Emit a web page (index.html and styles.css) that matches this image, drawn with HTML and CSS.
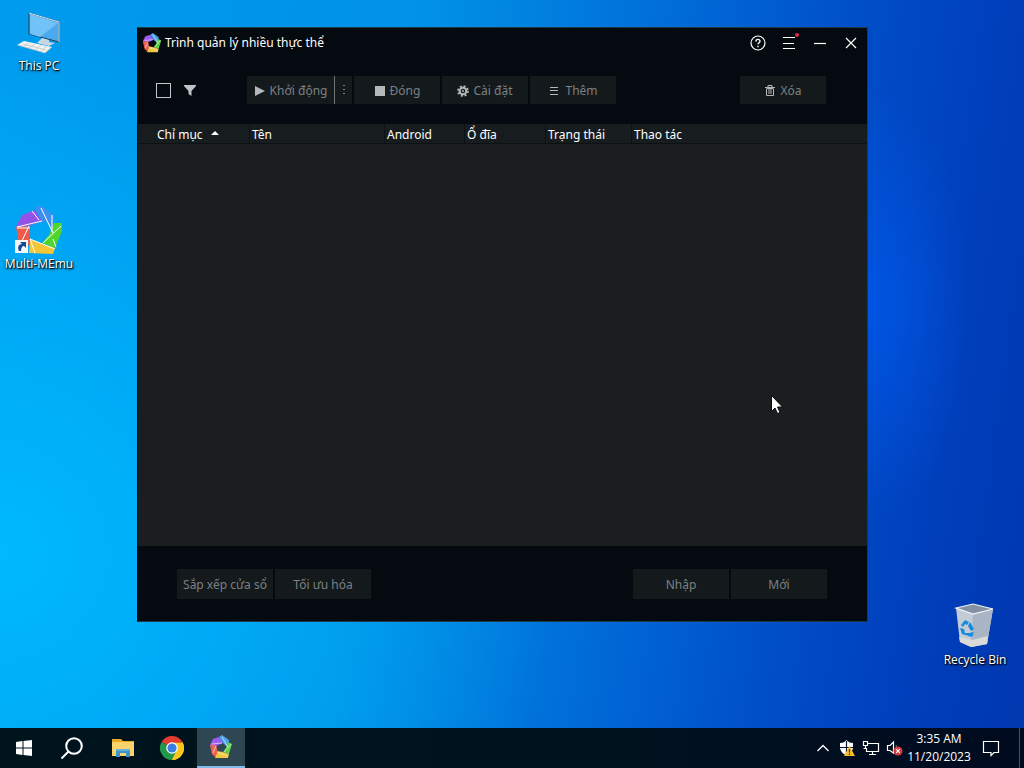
FILE: index.html
```html
<!DOCTYPE html>
<html lang="vi">
<head>
<meta charset="utf-8">
<title>Trình quản lý nhiều thực thể</title>
<link rel="stylesheet" href="styles.css">
</head>
<body>
<svg class="defs" aria-hidden="true">
  <symbol id="memu" viewBox="0 0 48 48">
    <path d="M1 21 7 9 20 4 27 15 14 20z" fill="#9254e8"/>
    <path d="M20 1 27 0 39 9 38 27 33 17 27 15z" fill="#3c91f0"/>
    <path d="M39 17 47 17 47 25 40 42 27 37 34 29z" fill="#50d52c"/>
    <path d="M15 33 28 38 40 42 38 48 14 47z" fill="#f4c534"/>
    <path d="M1 21 15 20 14 39 4 38z" fill="#ee5a48"/>
    <path d="M2 21 27 15M17 5 24 14M26 2 38 27M37 9V26M46 20 28 37M38 33 41 41M15 33 40 43M15 33 20 47M14 20 6 37M2 22H15" fill="none" stroke="#fff" stroke-width="1"/>
  </symbol>
  <symbol id="memu-small" viewBox="0 0 24 24">
    <path d="M1 10 4 4 10 2 14 8 7 11z" fill="#9b5df0"/>
    <path d="M10 2 13 0 20 5 19 13 14 8z" fill="#4ba3ee"/>
    <path d="M19 7 23 9 20 19 14 17 17 13z" fill="#5fd04a"/>
    <path d="M8 16 14 17 20 19 19 23 6 23z" fill="#f1c744"/>
    <path d="M1 10 7 10 9 17 6 22 3 19z" fill="#ec6152"/>
    <path d="M3 9 13 8M13 2 19 12M22 9 15 17M8 17 18 21M7 11 4 18" fill="none" stroke="#fff" stroke-width=".8" opacity=".75"/>
  </symbol>
</svg>

<main class="desktop">
  <a class="shortcut shortcut-pc" href="#pc">
    <svg width="48" height="48" viewBox="0 0 48 48" aria-hidden="true">
      <path d="M14 5 44 14V34L14 26z" fill="#4ba9ee" stroke="#263f58"/>
      <path d="M15 6 43 15 25 29 15 26z" fill="#71c2f7"/>
      <path d="M14 5 44 14V34" fill="none" stroke="#d6e4e9"/>
      <path d="M27 30 34 32V34L40 35 34 38 22 35z" fill="#c5d8e3"/>
      <path d="M9 33 37 39 30 45 2 37z" fill="#f2f2ef"/>
      <path d="M3 37 30 45 37 39M8 36 31 42M14 35 8 39M20 36 14 40M26 37 20 42M32 38 26 43" fill="none" stroke="#b4bfc6" stroke-width=".7"/>
    </svg>
    <span>This PC</span>
  </a>
  <a class="shortcut shortcut-memu" href="#memu-app">
    <svg width="48" height="48" viewBox="0 0 48 48" aria-hidden="true">
      <use href="#memu"/>
      <path d="M0 34H13V47H0z" fill="#f5f5f5"/>
      <path d="M4 45C2 41 4 38 7 38L5 36H11V42L9 40C7 40 6 42 6 45z" fill="#174a91"/>
    </svg>
    <span>Multi-MEmu</span>
  </a>
  <a class="shortcut shortcut-bin" href="#bin">
    <svg width="48" height="48" viewBox="0 0 48 48" aria-hidden="true">
      <path d="M5 6 22 11 42 7 36 42 20 45 9 40z" fill="#c3cbd6"/>
      <path d="M22 11 42 7 36 42 20 45z" fill="#a9b4c4"/>
      <path d="M8 35 21 38 37 34 36 42 20 45 9 40z" fill="#dadbd8"/>
      <path d="M5 6 22 2 42 7 22 12z" fill="#8491a5" stroke="#eef2f5" stroke-width="1.200"/>
      <path d="M10 23 14 18 18 20 16 23 14 22 12 25zM19 20 23 27 20 29 17 24zM9 26 13 27 14 31H18V34L11 32zM18 31 23 30 21 35 17 34z" fill="#168bdc"/>
    </svg>
    <span>Recycle Bin</span>
  </a>

  <section class="window" aria-label="Trình quản lý nhiều thực thể">
    <header class="titlebar">
      <svg width="20" height="20" aria-hidden="true"><use href="#memu-small"/></svg>
      <h1 class="title">Trình quản lý nhiều thực thể</h1>
      <div class="controls">
        <button class="control" aria-label="Trợ giúp"><svg width="16" height="16" viewBox="0 0 16 16"><circle cx="8" cy="8" r="7"/><path d="M6 6.4C6 3.6 10 3.8 10 6.2 10 7.7 8 7.7 8 9.3M8 10.8V12.2" stroke-width="1.4"/></svg></button>
        <button class="control" aria-label="Menu"><svg width="16" height="16" viewBox="0 0 16 16"><path d="M2 2.5H14M2 8.5H13M2 13.5H14"/></svg><i class="dot"></i></button>
        <button class="control" aria-label="Thu nhỏ"><svg width="16" height="16" viewBox="0 0 16 16"><path d="M2 8.5H14"/></svg></button>
        <button class="control" aria-label="Đóng cửa sổ"><svg width="16" height="16" viewBox="0 0 16 16"><path d="M3 3 13 13M13 3 3 13"/></svg></button>
      </div>
    </header>

    <div class="toolbar">
      <div class="selection">
        <input class="check" type="checkbox" aria-label="Chọn tất cả">
        <button class="filter" aria-label="Lọc"><svg width="14" height="14" viewBox="0 0 14 14"><path d="M1 2H13V3L8.500 8V13L5.500 11V8L1 3z" fill="#bfc3c5"/></svg></button>
      </div>
      <div class="actions">
        <div class="split">
          <button class="btn start"><svg width="12" height="12" viewBox="0 0 12 12"><path d="M1 1 11 6 1 11z" fill="#b4b8ba"/></svg>Khởi động</button>
          <button class="more" aria-label="Thêm tùy chọn khởi động"><svg width="4" height="12" viewBox="0 0 4 12"><path d="M1 1H3V2H1zM1 5H3V6H1zM1 9H3V10H1z" fill="#777d80"/></svg></button>
        </div>
        <button class="btn"><svg width="12" height="12" viewBox="0 0 12 12"><path d="M1 1H11V11H1z" fill="#b4b8ba"/></svg>Đóng</button>
        <button class="btn"><svg width="12" height="12" viewBox="0 0 12 12"><circle cx="6" cy="6" r="3.300" fill="none" stroke="#b4b8ba" stroke-width="2"/><circle cx="6" cy="6" r="4.900" fill="none" stroke="#b4b8ba" stroke-width="1.800" stroke-dasharray="2 1.848"/><circle cx="6" cy="6" r="1" fill="#b4b8ba"/></svg>Cài đặt</button>
        <button class="btn btn-add"><svg width="12" height="12" viewBox="0 0 12 12"><path d="M2 2.500H10M2 5.500H10M2 9.500H10" stroke="#b4b8ba"/></svg>Thêm</button>
      </div>
      <button class="btn"><svg width="12" height="12" viewBox="0 0 12 12"><path d="M1 2.500H11M4 2V.5H8V2M2.500 4V10.500H9.500V4M5 4V9M7 4V9M2.500 3.500H9.500" fill="none" stroke="#b4b8ba"/></svg>Xóa</button>
    </div>

    <div class="list">
      <table class="table">
        <colgroup><col class="c-index"><col class="c-name"><col class="c-android"><col class="c-disk"><col class="c-state"><col></colgroup>
        <thead>
          <tr>
            <th class="first">Chỉ mục<svg class="sort" width="8" height="4" viewBox="0 0 8 4" aria-hidden="true"><path d="M0 4 4 0 8 4z" fill="#fff"/></svg></th>
            <th>Tên</th><th>Android</th><th>Ổ đĩa</th><th>Trạng thái</th><th>Thao tác</th>
          </tr>
        </thead>
      </table>
    </div>

    <footer class="footer">
      <button class="btn wide">Sắp xếp cửa sổ</button>
      <button class="btn wide">Tối ưu hóa</button>
      <span class="spacer"></span>
      <button class="btn wide">Nhập</button>
      <button class="btn wide">Mới</button>
    </footer>
  </section>

  <svg class="cursor" width="12" height="19" viewBox="0 0 12 19" aria-hidden="true"><path d="M.5.5V16.500L4 13 6.500 18.500 9 17.500 6.500 12H11.500z" fill="#fff" stroke="#0b0d0f"/></svg>
</main>

<nav class="taskbar" aria-label="Taskbar">
  <button class="task" aria-label="Start"><svg width="18" height="18" viewBox="0 0 18 18"><path d="M1 3 7.500 2V8.500H1zM8.500 2 17 1V8.500H8.500zM1 9.500H7.500V16L1 15zM8.500 9.500H17V17L8.500 16z" fill="#fff"/></svg></button>
  <button class="task" aria-label="Search"><svg width="24" height="24" viewBox="0 0 24 24"><circle cx="14" cy="10" r="7.800" fill="none" stroke="#fff" stroke-width="2"/><path d="M8.500 15.500 1.500 22.500" stroke="#fff" stroke-width="2"/></svg></button>
  <button class="task explorer" aria-label="File Explorer"><svg width="22" height="20" viewBox="0 0 22 20"><path d="M0 1H9L11 3H22V18H0z" fill="#e7a927"/><path d="M0 4H22V18H0z" fill="#fbd36b"/><path d="M4 11H18V19H14V15H8V19H4z" fill="#3f91c9"/><path d="M4 11H18V13H4z" fill="#63b1de"/></svg></button>
  <button class="task" aria-label="Chrome"><svg width="24" height="24" viewBox="0 0 24 24"><path d="M12 12 1.600 6A12 12 0 0 1 22.400 6z" fill="#e33b2e"/><path d="M12 12 22.400 6A12 12 0 0 1 12 24z" fill="#fbc71b"/><path d="M12 12V24A12 12 0 0 1 1.600 6z" fill="#24984a"/><path d="M12 6.500H22.600L16.800 14.700z" fill="#fbc71b"/><path d="M12 6.500H22.600L22.400 6 20.800 4.500 12 5z" fill="#e33b2e"/><path d="M7.200 14.700 12 12 16.800 14.700 12 24z" fill="#24984a"/><path d="M16.800 14.700 12 24A12 12 0 0 0 22.600 6.500z" fill="#fbc71b"/><circle cx="12" cy="12" r="5.800" fill="#fff"/><circle cx="12" cy="12" r="4.600" fill="#3a7de5"/></svg></button>
  <button class="task active" aria-label="Multi-MEmu"><svg width="24" height="24"><use href="#memu-small"/></svg></button>
  <div class="tray">
    <button class="tray-btn" aria-label="Show hidden icons"><svg width="14" height="14" viewBox="0 0 14 14"><path d="M1.500 10 7 4.500 12.500 10" fill="none" stroke="#fff" stroke-width="1.300"/></svg></button>
    <button class="tray-btn" aria-label="Windows Security"><svg width="16" height="16" viewBox="0 0 16 16"><path d="M1 3C4 3 6 2 7.500 0 9 2 11 3 14 3V7C14 11 11 14 7.500 15.500 4 14 1 11 1 7z" fill="#fff"/><path d="M7.500 1V15M1 7.500H14" stroke="#07162a" stroke-width="1.200"/><path d="M10.500 6 16 16H5z" fill="#f6bd2d"/><path d="M10.500 9V12.500M10.500 13.500V15" stroke="#44371a" stroke-width="1.200"/></svg></button>
    <button class="tray-btn" aria-label="Network"><svg width="18" height="16" viewBox="0 0 18 16"><path d="M6 3.500H16.500V11.500H4.500V8M10.500 11.500V14.500M7 14.500H14M1.500 1.500H5.500V5.500H1.500zM3.500 5.500V8.500H1.500" fill="none" stroke="#fff" stroke-width="1.200"/></svg></button>
    <button class="tray-btn" aria-label="Volume muted"><svg width="18" height="16" viewBox="0 0 18 16"><path d="M1.500 5.500H4L7.500 2V13L4 10.500H1.500z" fill="none" stroke="#fff" stroke-width="1.200"/><path d="M10 5Q11 7 10 8" fill="none" stroke="#77808c"/><circle cx="12" cy="11" r="4.500" fill="#d43a3e"/><path d="M10.200 9.200 13.800 12.800M13.800 9.200 10.200 12.800" stroke="#fff" stroke-width="1.200"/></svg></button>
    <time class="clock"><span>3:35 AM</span><span>11/20/2023</span></time>
    <button class="notice" aria-label="Notifications"><svg width="18" height="18" viewBox="0 0 18 18"><path d="M1.500 2.500H16.500V13.500H12L9 16.500V13.500H1.500z" fill="none" stroke="#fff" stroke-width="1.200"/></svg></button>
    <button class="peek" aria-label="Show desktop"></button>
  </div>
</nav>
</body>
</html>
```
FILE: styles.css
```css
* { box-sizing: border-box; }

body {
  margin: 0;
  min-height: 100vh;
  display: flex;
  flex-direction: column;
  overflow: hidden;
  font: 12px/16px "Noto Sans", "Open Sans", sans-serif;
  color: #fff;
}

button {
  display: flex;
  align-items: center;
  justify-content: center;
  padding: 0;
  border: 0;
  background: none;
  color: inherit;
  font: inherit;
}

svg { display: block; flex: none; }
.defs { position: absolute; width: 0; height: 0; }

.desktop {
  position: relative;
  flex: 1;
  background:
    radial-gradient(ellipse 100px 220px at 85% 42%, rgba(0, 90, 240, .7), rgba(0, 80, 225, 0)),
    radial-gradient(ellipse 560px 520px at 0 76%, rgba(0, 186, 255, .95), rgba(0, 180, 250, 0)),
    linear-gradient(98deg, #009cee 0%, #0095ea 24%, #0092e6 38%, #006cd8 60%, #004dc8 77%, #003eba 90%, #0038b0 100%);
}

.shortcut {
  position: absolute;
  display: flex;
  flex-direction: column;
  align-items: center;
  gap: 2px;
  width: 76px;
  color: #fff;
  font-family: "Open Sans", "Noto Sans", sans-serif;
  text-decoration: none;
  white-space: nowrap;
}
.shortcut span { text-shadow: 1px 1px 1px #000, 0 1px 3px #000; }
.shortcut-pc { left: 1px; top: 8px; }
.shortcut-memu { left: 1px; top: 206px; }
.shortcut-bin { right: 11px; top: 602px; }

.window {
  position: absolute;
  inset: 27px 156px 106px 137px;
  display: flex;
  flex-direction: column;
  border: 1px solid #1c3b47;
  border-left-color: #050910;
  background: #050910;
}

.titlebar {
  display: flex;
  align-items: center;
  height: 30px;
  padding: 0 8px 0 4px;
  gap: 3px;
}
.title { flex: 1; margin: 0; font-size: 12px; font-weight: 400; }
.controls { display: flex; gap: 15px; }
.control { position: relative; width: 16px; height: 16px; }
.control svg { fill: none; stroke: #fff; stroke-width: 1.2; }
.dot {
  position: absolute;
  top: -2px;
  right: -2px;
  width: 4px;
  height: 4px;
  border-radius: 50%;
  background: #e02a50;
}

.toolbar {
  display: flex;
  align-items: center;
  height: 66px;
  padding: 0 41px 2px 18px;
}
.selection { display: flex; align-items: center; gap: 12px; width: 91px; }
.check {
  appearance: none;
  width: 15px;
  height: 15px;
  margin: 0;
  border: 1px solid #c4c7ca;
}
.actions { display: flex; flex: 1; gap: 2px; }
.split { display: flex; background: #14191c; }
.btn {
  width: 86px;
  height: 28px;
  padding-top: 2px;
  gap: 4px;
  background: #14191c;
  color: #7c8184;
  white-space: nowrap;
}
.start { width: 88px; border-right: 1px solid #6e7476; }
.more { width: 17px; }
.btn-add { gap: 5px; }

.list { flex: 1; background: #1a1e1f; }
.table {
  width: 100%;
  table-layout: fixed;
  border-collapse: separate;
  border-spacing: 0;
}
.table th {
  height: 20px;
  padding: 2px 0 0 2px;
  border-right: 1px solid #0c1114;
  border-bottom: 1px solid #0c1114;
  background: #171c1f;
  font-weight: 400;
  line-height: 16px;
  text-align: left;
  white-space: nowrap;
}
.table th:last-child { border-right: 0; }
.table .first { padding-left: 19px; }
.sort { display: inline-block; margin-left: 8px; vertical-align: 4px; }
.c-index { width: 112px; }
.c-name { width: 135px; }
.c-android { width: 80px; }
.c-disk { width: 81px; }
.c-state { width: 86px; }

.footer {
  display: flex;
  align-items: center;
  gap: 2px;
  height: 75px;
  padding: 0 40px 0 39px;
}
.wide { width: 96px; height: 30px; }
.spacer { flex: 1; }

.cursor { position: absolute; left: 771px; top: 395px; }

.taskbar {
  display: flex;
  height: 40px;
  background: linear-gradient(90deg, #00141d, #00121e 55%, #000b20);
}
.task { width: 48px; }
.explorer { margin: 0 1px 0 3px; }
.active {
  margin-left: 1px;
  background: #2f4653;
  border-bottom: 2px solid #7fb9e6;
}
.tray {
  display: flex;
  align-items: center;
  margin-left: auto;
  font-family: "Open Sans", "Noto Sans", sans-serif;
}
.tray-btn { width: 24px; height: 40px; }
.clock {
  display: flex;
  flex-direction: column;
  align-items: center;
  width: 64px;
  line-height: 18px;
}
.notice { width: 40px; height: 40px; margin-right: 8px; }
.peek { width: 5px; height: 40px; border-left: 1px solid #46516a; }
```
